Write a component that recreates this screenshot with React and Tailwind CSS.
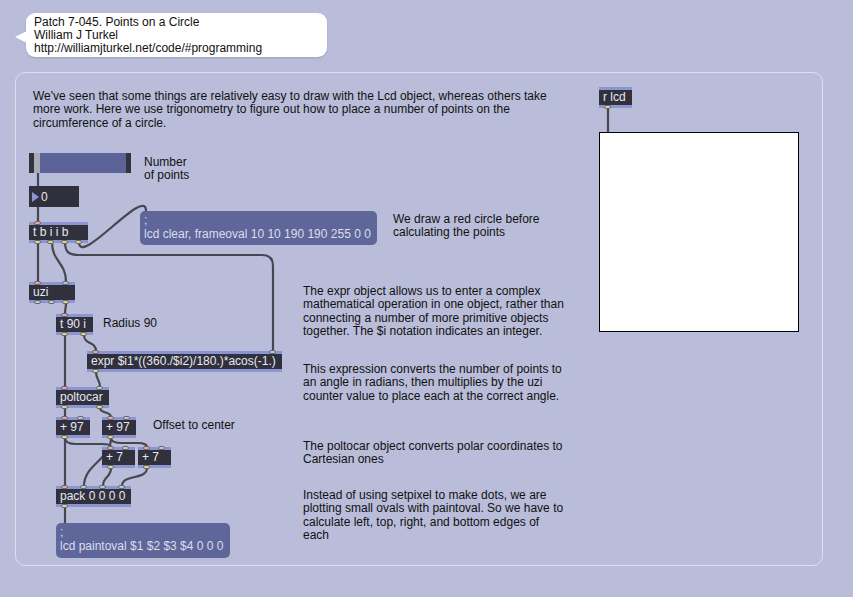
import React from 'react';

const PINK = '#e9a9a2';
const CYAN = '#9fd6dc';
const YEL = '#d6da86';
const GREY = '#c6c6cc';

// inlet / outlet centre offset inside a box of width w
const port = (i, n, w) => (n === 1 ? 9 : 9 + (i * (w - 18)) / (n - 1));

function Port({ left, color, bottom }) {
  return (
    <span
      className={`absolute w-[7px] h-[4px] rounded-full border border-[#666674] ${bottom ? 'bottom-[-4px]' : 'top-[-4px]'}`}
      style={{ left: left - 4.5, background: color }}
    />
  );
}

function Obj({ x, y, w, label, ins = [], outs = [] }) {
  return (
    <div
      className="absolute h-[21px] bg-[#31313d] border-y-[3px] border-[#8d94d2] text-[12px] leading-[15px] text-[#e8e8f2] pl-[4px] whitespace-nowrap"
      style={{ left: x, top: y, width: w }}
    >
      {label}
      {ins.map((c, i) => (
        <Port key={'i' + i} left={port(i, ins.length, w)} color={c} />
      ))}
      {outs.map((c, i) => (
        <Port key={'o' + i} left={port(i, outs.length, w)} color={c} bottom />
      ))}
    </div>
  );
}

function Msg({ x, y, w, h, text }) {
  return (
    <div
      className="absolute rounded-[5px] bg-[#5f6699] text-[12px] leading-[13.5px] text-[#dcdcee] pl-[4px] pt-[3px] whitespace-nowrap"
      style={{ left: x, top: y, width: w, height: h }}
    >
      ;<br />
      {text}
    </div>
  );
}

function Note({ x, y, children }) {
  return (
    <div
      className="absolute text-[12px] leading-[13.4px] text-[#111] whitespace-nowrap"
      style={{ left: x, top: y }}
    >
      {children}
    </div>
  );
}

const cord = (x1, y1, x2, y2, k) => {
  const d = k ?? Math.max(6, Math.abs(y2 - y1) / 2);
  return `M${x1} ${y1} C${x1} ${y1 + d} ${x2} ${y2 - d} ${x2} ${y2}`;
};

const cords = [
  cord(38, 173, 38, 186),
  cord(38, 207, 38, 222),
  cord(79, 242, 146, 211, 26),
  'M65 242 C65 251 68 255 78 255 L262 255 C270 255 273 259 273 266 L273 351',
  cord(38, 242, 38, 282),
  cord(52, 242, 66, 282),
  cord(66, 303, 65, 314),
  cord(65, 335, 65, 387),
  cord(84, 335, 96, 351, 10),
  cord(96, 372, 100, 387),
  cord(65, 408, 65, 417),
  cord(100, 408, 111, 417),
  cord(65, 438, 65, 486),
  'M65 438 C65 442 69 444 76 444 L102 444 C108 444 111 445 111 447',
  'M111 438 C111 442 115 443 122 443 L138 443 C144 443 147 445 147 447',
  cord(111, 438, 84, 486, 22),
  cord(111, 468, 103, 486, 10),
  cord(147, 468, 122, 486, 12),
  cord(65, 507, 65, 523),
  cord(608, 109, 608, 132),
];

export default function App() {
  return (
    <div className="relative w-[853px] h-[597px] overflow-hidden bg-[#b9bdd9] font-['Liberation_Sans',Arial,sans-serif]">
      {/* patch panel */}
      <div className="absolute left-[15px] top-[72px] w-[808px] h-[494px] rounded-[10px] border border-[#dedfe8]" />

      {/* title bubble */}
      <div className="absolute left-[26px] top-[13px] w-[301px] h-[44px] rounded-[9px] bg-white shadow-[0_1px_2px_rgba(0,0,0,0.15)] pl-[8px] pt-[3px] text-[12px] leading-[13px] text-[#111]">
        Patch 7-045. Points on a Circle
        <br />
        William J Turkel
        <br />
        http://williamjturkel.net/code/#programming
      </div>
      <svg className="absolute left-[14px] top-[30px]" width="14" height="14" viewBox="0 0 14 14">
        <path d="M13 1 L1 7 L13 13 Z" fill="#fff" />
      </svg>

      {/* cables */}
      <svg className="absolute left-0 top-0" width="853" height="597">
        {cords.map((d, i) => (
          <path key={i} d={d} fill="none" stroke="#474752" strokeWidth="2.2" strokeLinecap="round" />
        ))}
      </svg>

      <Note x={33} y={90}>
        We've seen that some things are relatively easy to draw with the Lcd object, whereas others take
        <br />
        more work. Here we use trigonometry to figure out how to place a number of points on the
        <br />
        circumference of a circle.
      </Note>

      {/* slider */}
      <div className="absolute left-[29px] top-[153px] w-[102px] h-[20px] flex bg-[#33333e]">
        <div className="w-[5px]" />
        <div className="w-[6px] bg-[#a9abb6]" />
        <div className="w-[86px] bg-[#5c6399]" />
      </div>
      <Note x={144} y={156}>
        Number
        <br />
        of points
      </Note>

      {/* number box */}
      <div className="absolute left-[29px] top-[186px] w-[50px] h-[21px] bg-[#30303c] flex items-center text-[12px] text-[#e8e8f2]">
        <svg width="11" height="12" viewBox="0 0 11 12" className="ml-[2px]">
          <path d="M1 1 L8 6 L1 11 Z" fill="#8d94d6" />
        </svg>
        <span className="ml-[-1px]">0</span>
      </div>

      <Obj x={29} y={222} w={59} label="t b i i b" ins={[PINK]} outs={[YEL, YEL, YEL, YEL]} />
      <Msg x={140} y={211} w={237} h={34} text="lcd clear, frameoval 10 10 190 190 255 0 0" />
      <Note x={393} y={213}>
        We draw a red circle before
        <br />
        calculating the points
      </Note>

      <Obj x={29} y={282} w={46} label="uzi" ins={[PINK, CYAN]} outs={[GREY, GREY, YEL]} />
      <Obj x={56} y={314} w={37} label="t 90 i" ins={[PINK]} outs={[YEL, YEL]} />
      <Note x={103} y={317}>Radius 90</Note>
      <Obj x={87} y={351} w={195} label="expr $i1*((360./$i2)/180.)*acos(-1.)" ins={[PINK, CYAN]} outs={[YEL]} />
      <Obj x={56} y={387} w={53} label="poltocar" ins={[PINK, CYAN]} outs={[YEL, YEL]} />
      <Obj x={56} y={417} w={34} label="+ 97" ins={[PINK, GREY]} outs={[YEL]} />
      <Obj x={102} y={417} w={34} label="+ 97" ins={[PINK, GREY]} outs={[YEL]} />
      <Note x={153} y={419}>Offset to center</Note>
      <Obj x={102} y={447} w={33} label="+ 7" ins={[PINK, GREY]} outs={[YEL]} />
      <Obj x={138} y={447} w={33} label="+ 7" ins={[PINK, GREY]} outs={[YEL]} />
      <Obj x={56} y={486} w={75} label="pack 0 0 0 0" ins={[PINK, CYAN, CYAN, CYAN]} outs={[YEL]} />
      <Msg x={56} y={523} w={174} h={35} text="lcd paintoval $1 $2 $3 $4 0 0 0" />

      <Note x={303} y={285}>
        The expr object allows us to enter a complex
        <br />
        mathematical operation in one object, rather than
        <br />
        connecting a number of more primitive objects
        <br />
        together. The $i notation indicates an integer.
      </Note>
      <Note x={303} y={363}>
        This expression converts the number of points to
        <br />
        an angle in radians, then multiplies by the uzi
        <br />
        counter value to place each at the correct angle.
      </Note>
      <Note x={303} y={440}>
        The poltocar object converts polar coordinates to
        <br />
        Cartesian ones
      </Note>
      <Note x={303} y={489}>
        Instead of using setpixel to make dots, we are
        <br />
        plotting small ovals with paintoval. So we have to
        <br />
        calculate left, top, right, and bottom edges of
        <br />
        each
      </Note>

      <Obj x={599} y={87} w={33} label="r lcd" outs={[YEL]} />
      {/* lcd */}
      <div className="absolute left-[599px] top-[132px] w-[200px] h-[200px] bg-white border-[1.5px] border-black" />
    </div>
  );
}
